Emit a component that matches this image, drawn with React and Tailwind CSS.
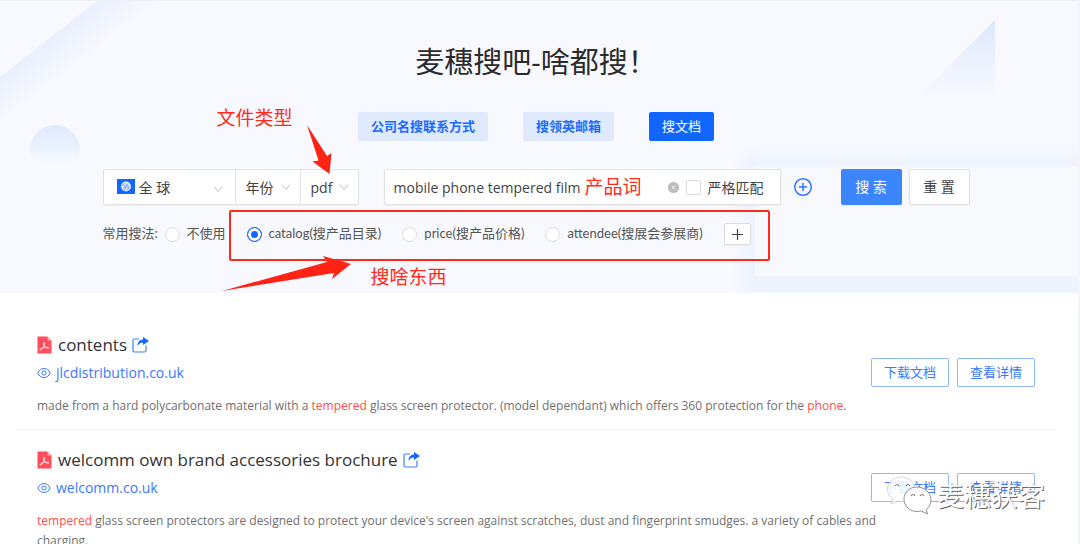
import { useState } from 'react';

const fontStack = "font-['Open_Sans','Noto_Sans_CJK_SC',sans-serif]";

const tabs = [
    { id: 1, label: '公司名搜联系方式' },
    { id: 2, label: '搜领英邮箱' },
    { id: 3, label: '搜文档' },
]

const methods = [
    { id: 'none', label: '不使用' },
    { id: 'catalog', label: 'catalog(搜产品目录)' },
    { id: 'price', label: 'price(搜产品价格)' },
    { id: 'attendee', label: 'attendee(搜展会参展商)' },
]

const results = [
    {
        id: 1,
        title: 'contents',
        site: 'jlcdistribution.co.uk',
        parts: [
            { text: 'made from a hard polycarbonate material with a ' },
            { text: 'tempered', hit: true },
            { text: ' glass screen protector. (model dependant) which offers 360 protection for the ' },
            { text: 'phone', hit: true },
            { text: '.' },
        ],
    },
    {
        id: 2,
        title: 'welcomm own brand accessories brochure',
        site: 'welcomm.co.uk',
        parts: [
            { text: 'tempered', hit: true },
            { text: " glass screen protectors are designed to protect your device's screen against scratches, dust and fingerprint smudges. a variety of cables and charging." },
        ],
    },
]

const Chevron = ({ className }) => (
    <svg className={`pointer-events-none absolute ${className}`} width="10" height="8" viewBox="0 0 10 8" fill="none" stroke="#bfbfbf">
        <path d="M1 1.5 5 6.5 9 1.5" />
    </svg>
)

const GlobeFlag = () => (
    <svg className="pointer-events-none absolute left-[13px] top-[9px]" width="18" height="15" viewBox="0 0 18 15">
        <rect width="18" height="15" fill="#1166ff" />
        <circle cx="9" cy="7.5" r="5" fill="#e4edff" />
        <path d="M5 7 8 4.500M6 9.500l5-5M7.500 11.500l1-3 3-2M10.500 11l1.500-3.500" fill="none" stroke="#1166ff" strokeWidth=".7" />
    </svg>
)

const PdfIcon = () => (
    <svg width="15" height="18" viewBox="0 0 15 18" className="shrink-0">
        <path d="M1 .5h9.500L14.500 4.500V17.500H.5V1z" fill="#ff4d5b" />
        <path d="M10.500.5 14.500 4.500h-4z" fill="#ffb3ba" />
        <path d="M7 6.500c1.200 0 .3 2.500-.6 4.300-1 2-2.600 3.700-3.300 3.200-.8-.7 2-2.200 4.400-2.600 2.200-.4 4.300-.2 4.200.6-.1.800-2.300 0-3.600-1.300C6.900 9.500 6.100 6.500 7 6.500z" fill="none" stroke="#fff" strokeWidth=".8" />
    </svg>
)

const ShareIcon = () => (
    <svg width="17" height="16" viewBox="0 0 17 16" fill="none" className="shrink-0">
        <path d="M7 2H2.500Q1 2 1 3.500v10Q1 15 2.500 15h10q1.500 0 1.500-1.500V8.500" stroke="#3b82ff" strokeWidth="1.200" />
        <path d="M11 0l6 4-6 4V5.500C8.500 5.500 7 6.500 5.500 9 5.500 5.500 7.500 2.700 11 2.500z" fill="#1166ff" />
    </svg>
)

const EyeIcon = () => (
    <svg width="14" height="12" viewBox="0 0 14 12" fill="none" stroke="#3b78ff" className="shrink-0">
        <path d="M.8 6C2.200 3 4.400 1.500 7 1.500S11.800 3 13.200 6C11.800 9 9.600 10.500 7 10.500S2.200 9 .8 6z" />
        <circle cx="7" cy="6" r="2.100" />
    </svg>
)

const HeaderShapes = () => (
    <>
        <svg className="absolute left-0 top-0" width="180" height="190" viewBox="0 0 180 190">
            <defs>
                <linearGradient id="band" gradientUnits="userSpaceOnUse" x1="48" y1="38" x2="72" y2="69">
                    <stop offset="0" stopColor="#e9f0fe" />
                    <stop offset="1" stopColor="#e9f0fe" stopOpacity="0" />
                </linearGradient>
                <linearGradient id="moon" x1="0" y1="0" x2="0" y2="1">
                    <stop offset="0" stopColor="#e0eafd" />
                    <stop offset=".5" stopColor="#ebf2fe" />
                    <stop offset=".85" stopColor="#f8f9fe" stopOpacity="0" />
                </linearGradient>
            </defs>
            <path d="M0 76 97 0H180L0 140z" fill="url(#band)" />
            <circle cx="55" cy="149" r="25" fill="url(#moon)" />
        </svg>
        <svg className="absolute right-0 top-0" width="380" height="293" viewBox="698 0 380 293">
            <defs>
                <linearGradient id="sail" x1="0" y1="0" x2="0" y2="1">
                    <stop offset="0" stopColor="#d9e6fd" />
                    <stop offset=".85" stopColor="#f1f5fe" stopOpacity=".5" />
                    <stop offset="1" stopColor="#f8f9fe" stopOpacity="0" />
                </linearGradient>
                <filter id="soft" x="-20%" y="-30%" width="140%" height="160%">
                    <feGaussianBlur stdDeviation="7" />
                </filter>
            </defs>
            <path d="M995 19V100H914z" fill="url(#sail)" />
            <rect x="742" y="152" width="400" height="200" fill="#eef4fe" filter="url(#soft)" />
            <rect x="755" y="165" width="325" height="110" fill="#f8f9fd" />
        </svg>
    </>
)

// red hand-drawn notes over the search form
const Notes = () => (
    <div className="pointer-events-none absolute inset-0 text-[19px] leading-6 text-[#ff2a1c]">
        <span className="absolute left-[114px] top-[-63px] whitespace-nowrap">文件类型</span>
        <span className="absolute left-[482px] top-[6px] whitespace-nowrap">产品词</span>
        <span className="absolute left-[268px] top-[96px] whitespace-nowrap">搜啥东西</span>
        <div className="absolute left-[126px] top-[41px] h-[51px] w-[541px] rounded-xs border-2 border-[#ff2a1c]"></div>
        <svg className="absolute left-[200px] top-[-48px]" width="40" height="56" viewBox="0 0 40 56" fill="#ff2314">
            <path d="M4 4 24 35 28.500 32 26.500 53 9.500 40.500 15.500 39.500z" />
        </svg>
        <svg className="absolute left-[117px] top-[84px]" width="136" height="42" viewBox="0 0 136 42" fill="#ff2314">
            <path d="M2 38 107 9 103 3 131 11 112 26 114 20z" />
        </svg>
    </div>
)

const SearchForm = () => {
    const [ keyword, setKeyword ] = useState('mobile phone tempered film')
    const [ method, setMethod ] = useState('catalog')

    return(
        <form className="relative mt-7 w-[867px] max-w-full" onSubmit={ (e) => e.preventDefault() }>
            <div className="flex h-9 items-stretch text-sm text-[#444]">
                <div className="flex w-[256px] divide-x divide-[#e2e2e2] rounded-xs border border-[#e2e2e2] bg-white shadow-xs">
                    <div className="relative w-[132px]">
                        <GlobeFlag />
                        <select aria-label="地区" className="h-full w-full appearance-none pl-[35px] pt-px outline-none">
                            <option>全 球</option>
                        </select>
                        <Chevron className="right-3 top-[15px]" />
                    </div>
                    <div className="relative w-[65px]">
                        <select aria-label="年份" className="h-full w-full appearance-none pl-[10px] pt-px outline-none">
                            <option>年份</option>
                        </select>
                        <Chevron className="right-[9px] top-[13px]" />
                    </div>
                    <div className="relative flex-1">
                        <select aria-label="文件类型" className="h-full w-full appearance-none pl-[10px] pt-px outline-none">
                            <option>pdf</option>
                        </select>
                        <Chevron className="right-[9px] top-[13px]" />
                    </div>
                </div>

                <div className="ml-[25px] flex flex-1 items-center rounded-xs border border-[#e2e2e2] bg-white pl-[9px] pr-4 shadow-xs">
                    <input aria-label="产品词" className="min-w-0 flex-1 pt-px outline-none" value={ keyword } onChange={ (e) => setKeyword(e.target.value) } />
                    <button type="button" aria-label="清空" onClick={ () => setKeyword('') } className="mr-[7px]">
                        <svg width="11" height="11" viewBox="0 0 11 11" className="block">
                            <circle cx="5.500" cy="5.500" r="5.500" fill="#bdbdbd" />
                            <path d="M3.700 3.700l3.600 3.600M7.300 3.700 3.700 7.300" stroke="#fff" />
                        </svg>
                    </button>
                    <label className="flex items-center gap-[7px] whitespace-nowrap pt-px">
                        <input type="checkbox" className="h-[15px] w-[15px] appearance-none rounded-xs border border-[#dcdcdc] bg-white checked:bg-[#1166ff]" />
                        严格匹配
                    </label>
                </div>

                <button type="button" aria-label="添加关键词" className="ml-3 self-center">
                    <svg width="20" height="20" viewBox="0 0 20 20" fill="none" stroke="#2f74ff" className="block">
                        <circle cx="10" cy="10" r="8.300" strokeWidth="1.500" />
                        <path d="M10 6v8M6 10h8" strokeWidth="1.500" />
                    </svg>
                </button>
                <button type="submit" className="ml-[28px] w-[61px] rounded-xs bg-[#3b85ff] text-white shadow-xs">搜 索</button>
                <button type="reset" className="ml-[7px] w-[61px] rounded-xs border border-[#e2e2e2] bg-white shadow-xs">重 置</button>
            </div>

            <div className="mt-[18px] flex h-[22px] items-center font-['Lato','Noto_Sans_CJK_SC',sans-serif] text-[13px] text-[#555]">
                <span className="w-[62px] whitespace-nowrap">常用搜法:</span>
                <div className="flex items-center gap-[21px]">
                    { methods.map( m =>
                        <label key={ m.id } className="flex items-center gap-[7px] whitespace-nowrap">
                            <input type="radio" name="method" checked={ method === m.id } onChange={ () => setMethod(m.id) }
                                className="h-[15px] w-[15px] appearance-none rounded-full border border-[#dcdcdc] bg-white checked:border-[#1166ff] checked:bg-[#1166ff] checked:shadow-[inset_0_0_0_3px_white]"
                            />
                            { m.label }
                        </label>
                    ) }
                    <button type="button" aria-label="添加搜法" className="flex h-[22px] w-[27px] items-center justify-center rounded-xs border border-[#dedede] bg-white shadow-xs">
                        <svg width="11" height="11" viewBox="0 0 11 11" stroke="#444" strokeWidth="1.200">
                            <path d="M5.500 0v11M0 5.500h11" />
                        </svg>
                    </button>
                </div>
            </div>

            <Notes />
        </form>
    )
}

const Result = ({ result }) => (
    <li className="flex items-start justify-between border-b border-[#f3f3f3] pb-[13px] pl-[22px] pr-[22px] pt-4">
        <div className="min-w-0 flex-1">
            <h2 className="flex h-7 items-center text-[17px] leading-7 text-[#333]">
                <PdfIcon />
                <span className="ml-[6px] mr-[5px]">{ result.title }</span>
                <a href="#" aria-label="打开"><ShareIcon /></a>
            </h2>
            <a href="#" className="mt-[2px] flex h-6 items-center gap-[5px] text-sm text-[#3b78ff]">
                <EyeIcon />
                { result.site }
            </a>
            <p className="-mr-3 mt-[11px] text-xs leading-5 text-[#707070]">
                { result.parts.map( (part, i) =>
                    <span key={ i } className={ part.hit ? 'text-[#ff4d4f]' : '' }>{ part.text }</span>
                ) }
            </p>
        </div>
        <div className="mt-[27px] flex shrink-0 gap-2 text-[13px] text-[#3b78ff]">
            <button className="h-[29px] w-[78px] rounded-xs border border-[#8fb6ff] bg-white">下载文档</button>
            <button className="h-[29px] w-[78px] rounded-xs border border-[#8fb6ff] bg-white">查看详情</button>
        </div>
    </li>
)

const Watermark = () => (
    <div className="pointer-events-none absolute bottom-[28px] right-[33px] flex items-center gap-1">
        <svg width="46" height="40" viewBox="0 0 46 40" fill="#fff" stroke="#999" strokeWidth=".8">
            <path d="M14 1C6.500 1 .5 6.500.5 13.500c0 4 2 7.500 5.500 9.700L4.500 28l5.500-3c1.500.4 3 .6 4.500.6 8 0 14-5.500 14-12.300S22 1 14 1z" stroke="#ccc" fillOpacity=".85" />
            <path d="M30 11c-7.500 0-13 5.200-13 12S22.500 35.500 30 35.500c1.500 0 3-.2 4.300-.6L40.500 38l-1.300-4.300C42 31.500 44 27.700 44 23.500 44 17 37.500 11 30 11z" stroke="#777" />
            <path d="M8 10q2-3 4 0M19 10q2-3 4 0M24 20q2-3 4 0M33 20q2-3 4 0" fill="none" stroke="#777" strokeWidth="1.200" />
        </svg>
        <span className="text-[27px] leading-10 text-white [text-shadow:1px_1px_0_#666]">麦穗获客</span>
    </div>
)

export default () => {
    const [ tab, setTab ] = useState(3)

    return(
        <div className={`relative h-screen overflow-hidden border-r-2 border-[#f4f5fb] bg-white ${fontStack}`}>
            <header className="relative overflow-hidden border-t border-[#f0f1f6] bg-[#f8f9fe] pb-12 pr-[6px]">
                <HeaderShapes />
                <div className="relative flex flex-col items-center">
                    <h1 className="mt-[41px] text-[29px] leading-10 text-[#2b2b2b]">麦穗搜吧-啥都搜！</h1>
                    <nav className="mt-[30px] flex gap-[35px] text-[13px]">
                        { tabs.map( t =>
                            <button key={ t.id } onClick={ () => setTab(t.id) }
                                className={`h-[29px] rounded-xs px-[13px] ${ tab === t.id ? 'bg-[#1166ff] text-white' : 'bg-[#e0eafe] font-bold text-[#1a6aff]' }`}
                            >
                                { t.label }
                            </button>
                        ) }
                    </nav>
                    <SearchForm />
                </div>
            </header>

            <ul className="ml-[15px] mr-[21px] pt-[22px]">
                { results.map( r => <Result key={ r.id } result={ r } /> ) }
            </ul>

            <Watermark />
        </div>
    )
}
